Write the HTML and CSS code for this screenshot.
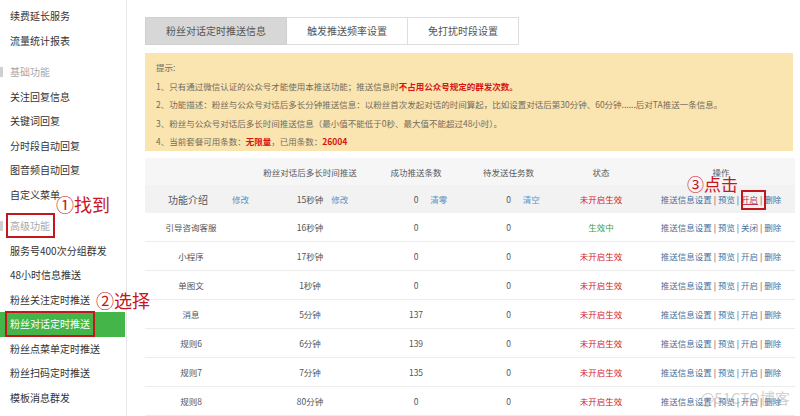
FILE: index.html
```html
<!DOCTYPE html>
<html lang="zh-CN">
<head>
<meta charset="utf-8">
<title>粉丝对话定时推送</title>
<link rel="stylesheet" href="styles.css">
</head>
<body>
<div class="page">
  <aside class="sidebar">
    <div class="nav-item">续费延长服务</div>
    <div class="nav-item">流量统计报表</div>
    <div class="nav-group">基础功能</div>
    <div class="nav-item">关注回复信息</div>
    <div class="nav-item">关键词回复</div>
    <div class="nav-item">分时段自动回复</div>
    <div class="nav-item">图音频自动回复</div>
    <div class="nav-item">自定义菜单</div>
    <div class="nav-group">高级功能</div>
    <div class="nav-item">服务号400次分组群发</div>
    <div class="nav-item">48小时信息推送</div>
    <div class="nav-item">粉丝关注定时推送</div>
    <div class="nav-item active">粉丝对话定时推送</div>
    <div class="nav-item">粉丝点菜单定时推送</div>
    <div class="nav-item">粉丝扫码定时推送</div>
    <div class="nav-item">模板消息群发</div>
  </aside>

  <main class="main">
    <div class="tabs">
      <div class="tab tab-1 current">粉丝对话定时推送信息</div>
      <div class="tab tab-2">触发推送频率设置</div>
      <div class="tab tab-3">免打扰时段设置</div>
    </div>

    <div class="notice">
      <p>提示:</p>
      <p>1、只有通过微信认证的公众号才能使用本推送功能；推送信息时<b class="red">不占用公众号规定的群发次数。</b></p>
      <p>2、功能描述：粉丝与公众号对话后多长分钟推送信息：以粉丝首次发起对话的时间算起，比如设置对话后第30分钟、60分钟......后对TA推送一条信息。</p>
      <p>3、粉丝与公众号对话后多长时间推送信息（最小值不能低于0秒、最大值不能超过48小时）。</p>
      <p>4、当前套餐可用条数：<b class="red">无限量</b>，已用条数：<b class="red">26004</b></p>
    </div>

    <div class="table">
      <div class="row head">
        <div class="cell"></div>
        <div class="cell">粉丝对话后多长时间推送</div>
        <div class="cell">成功推送条数</div>
        <div class="cell">待发送任务数</div>
        <div class="cell">状态</div>
        <div class="cell">操作</div>
      </div>
      <div class="row first">
        <div class="cell intro"><span class="intro-name">功能介绍</span><a class="lnk">修改</a></div>
        <div class="cell split"><span class="val">15秒钟</span><a class="lnk gap8">修改</a></div>
        <div class="cell split"><span class="val">0</span><a class="lnk gap12">清零</a></div>
        <div class="cell split"><span class="val">0</span><a class="lnk gap12">清空</a></div>
        <div class="cell off">未开启生效</div>
        <div class="cell acts"><a>推送信息设置</a> | <a>预览</a> | <a class="hl">开启</a> | <a>删除</a></div>
      </div>
      <div class="row">
        <div class="cell name">引导咨询客服</div>
        <div class="cell">16秒钟</div>
        <div class="cell">0</div>
        <div class="cell">0</div>
        <div class="cell on">生效中</div>
        <div class="cell acts"><a>推送信息设置</a> | <a>预览</a> | <a>关闭</a> | <a>删除</a></div>
      </div>
      <div class="row">
        <div class="cell name">小程序</div>
        <div class="cell">17秒钟</div>
        <div class="cell">0</div>
        <div class="cell">0</div>
        <div class="cell off">未开启生效</div>
        <div class="cell acts"><a>推送信息设置</a> | <a>预览</a> | <a>开启</a> | <a>删除</a></div>
      </div>
      <div class="row">
        <div class="cell name">单图文</div>
        <div class="cell">1秒钟</div>
        <div class="cell">0</div>
        <div class="cell">0</div>
        <div class="cell off">未开启生效</div>
        <div class="cell acts"><a>推送信息设置</a> | <a>预览</a> | <a>开启</a> | <a>删除</a></div>
      </div>
      <div class="row">
        <div class="cell name">消息</div>
        <div class="cell">5分钟</div>
        <div class="cell">137</div>
        <div class="cell">0</div>
        <div class="cell off">未开启生效</div>
        <div class="cell acts"><a>推送信息设置</a> | <a>预览</a> | <a>开启</a> | <a>删除</a></div>
      </div>
      <div class="row">
        <div class="cell name">规则6</div>
        <div class="cell">6分钟</div>
        <div class="cell">139</div>
        <div class="cell">0</div>
        <div class="cell off">未开启生效</div>
        <div class="cell acts"><a>推送信息设置</a> | <a>预览</a> | <a>开启</a> | <a>删除</a></div>
      </div>
      <div class="row">
        <div class="cell name">规则7</div>
        <div class="cell">7分钟</div>
        <div class="cell">135</div>
        <div class="cell">0</div>
        <div class="cell off">未开启生效</div>
        <div class="cell acts"><a>推送信息设置</a> | <a>预览</a> | <a>开启</a> | <a>删除</a></div>
      </div>
      <div class="row">
        <div class="cell name">规则8</div>
        <div class="cell">80分钟</div>
        <div class="cell">0</div>
        <div class="cell">0</div>
        <div class="cell off">未开启生效</div>
        <div class="cell acts"><a>推送信息设置</a> | <a>预览</a> | <a>开启</a> | <a>删除</a></div>
      </div>
    </div>
  </main>

  <div class="mark box-1"></div>
  <div class="mark box-2"></div>
  <div class="mark box-3"></div>
  <div class="note note-1">①找到</div>
  <div class="note note-2">②选择</div>
  <div class="note note-3">③点击</div>
  <div class="watermark">@51CTO博客</div>
</div>
</body>
</html>
```

FILE: styles.css
```css
* { box-sizing: border-box; }

html, body {
  margin: 0;
  padding: 0;
  background: #fff;
}

body {
  font-family: "Noto Sans CJK SC", "Microsoft YaHei", "Liberation Sans", sans-serif;
  color: #444;
}

.page {
  position: relative;
  width: 800px;
  height: 416px;
  overflow: hidden;
  display: flex;
  align-items: flex-start;
}

/* ---------- sidebar ---------- */
.sidebar {
  flex: 0 0 127px;
  height: 416px;
  padding-top: 4px;
  border-right: 1px solid #e6e6e6;
}

.nav-item,
.nav-group {
  height: 24.5px;
  line-height: 24.5px;
  padding-left: 10px;
  font-size: 10px;
  color: #333;
  white-space: nowrap;
}

.nav-group {
  margin-top: 7px;
  color: #a8a8a8;
  background: linear-gradient(#cfcfcf, #cfcfcf) no-repeat 0 50% / 3px 10px;
}

.nav-item.active {
  width: 125px;
  background: #44b549;
  color: #fff;
}

/* ---------- main ---------- */
.main {
  margin-left: 18px;
  width: 650px;
  padding-top: 17px;
}

.tabs {
  display: flex;
  height: 28px;
}

.tab {
  height: 28px;
  line-height: 26px;
  border: 1px solid #dedede;
  border-left: none;
  text-align: center;
  font-size: 10px;
  color: #555;
  background: #fff;
}

.tab-1 { width: 142px; border-left: 1px solid #dedede; }
.tab-2 { width: 121px; }
.tab-3 { width: 111px; }

.tab.current {
  background: #d7d7d7;
  border-color: #d0d0d0;
}

.notice {
  margin-top: 8px;
  width: 648px;
  height: 98px;
  padding: 5px 10px 0 11px;
  background: #fae4b0;
  font-size: 8.5px;
  line-height: 18.6px;
  color: #746c5c;
}

.notice p {
  margin: 0;
  white-space: nowrap;
}

.red {
  color: #d7140f;
  font-weight: bold;
}

/* ---------- table ---------- */
.table {
  margin-top: 7px;
  font-size: 8.5px;
  color: #555;
}

.row {
  display: grid;
  grid-template-columns: 105px 120px 92px 93px 92px 148px;
  align-items: center;
  height: 29px;
  border-bottom: 1px solid #ececec;
  text-align: center;
}

.row.head {
  height: 27px;
  background: #f6f6f6;
  border-bottom: none;
  color: #5a5a5a;
}

.row.first {
  height: 28px;
  background: #f2f2f2;
  border-bottom: none;
}

.cell {
  white-space: nowrap;
}

.cell.name {
  padding-right: 13px;
}

.cell.intro {
  display: flex;
  align-items: center;
  padding-left: 23px;
  gap: 24px;
  text-align: left;
}

.intro-name {
  font-size: 10px;
}

.cell.split {
  display: grid;
  grid-template-columns: 1fr auto 1fr;
  align-items: center;
}

.cell.split .val { grid-column: 2; }
.cell.split .lnk { grid-column: 3; justify-self: start; }

.lnk {
  color: #5b95c8;
}

.gap8 { margin-left: 8px; }
.gap12 { margin-left: 12px; }

.off { color: #d2232a; }
.on { color: #3c9c3f; }

.acts {
  color: #444;
}

.acts a {
  color: #44729c;
}

.acts a.hl {
  color: #c13a52;
  text-decoration: underline;
}

/* ---------- annotations ---------- */
.mark {
  position: absolute;
  border: 2px solid #c4161c;
}

.box-1 { left: 6px; top: 213px; width: 49px; height: 25px; }
.box-2 { left: 5px; top: 311px; width: 90px; height: 26px; }
.box-3 { left: 741px; top: 190px; width: 25px; height: 20px; }

.note {
  position: absolute;
  font-size: 18px;
  line-height: 20px;
  color: #c8161d;
  white-space: nowrap;
}

.note-1 { left: 56px; top: 194px; }
.note-2 { left: 96px; top: 290px; }
.note-3 { left: 687px; top: 174px; font-size: 17px; }

.watermark {
  position: absolute;
  right: 10px;
  bottom: 9px;
  font-size: 15px;
  line-height: 18px;
  color: rgba(150, 150, 150, 0.45);
}
```
